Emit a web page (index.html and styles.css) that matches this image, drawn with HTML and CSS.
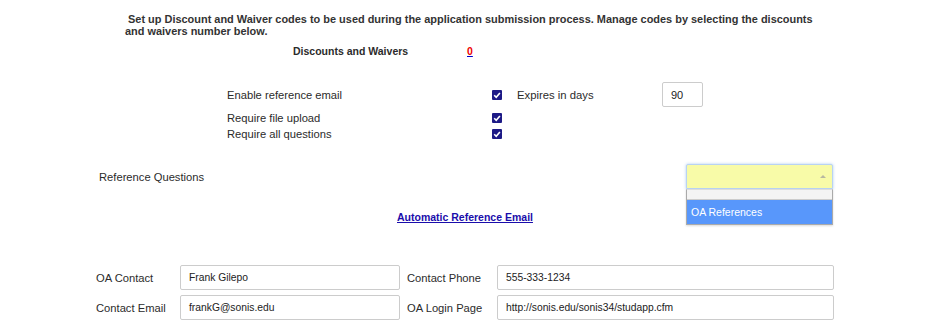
FILE: index.html
```html
<!DOCTYPE html>
<html>
<head>
<meta charset="utf-8">
<link rel="stylesheet" href="styles.css">
</head>
<body>
<div class="page">
  <p class="intro">&nbsp;Set up Discount and Waiver codes to be used during the application submission process. Manage codes by selecting the discounts and waivers number below.</p>
  <div class="dw">
    <span class="dw-label">Discounts and Waivers</span>
    <a class="dw-count" href="#">0</a>
  </div>

  <div class="settings">
    <div class="set-row first">
      <span class="set-label">Enable reference email</span>
      <span class="check"><svg viewBox="0 0 10 10" width="10" height="10"><path d="M2.2 5.2 L4.2 7.2 L7.9 2.9" fill="none" stroke="#fff" stroke-width="1.6"/></svg></span>
      <span class="exp-label">Expires in days</span>
      <span class="input small">90</span>
    </div>
    <div class="set-row second">
      <span class="set-label">Require file upload</span>
      <span class="check"><svg viewBox="0 0 10 10" width="10" height="10"><path d="M2.2 5.2 L4.2 7.2 L7.9 2.9" fill="none" stroke="#fff" stroke-width="1.6"/></svg></span>
    </div>
    <div class="set-row third">
      <span class="set-label">Require all questions</span>
      <span class="check"><svg viewBox="0 0 10 10" width="10" height="10"><path d="M2.2 5.2 L4.2 7.2 L7.9 2.9" fill="none" stroke="#fff" stroke-width="1.6"/></svg></span>
    </div>
  </div>

  <div class="refq">
    <span class="refq-label">Reference Questions</span>
    <div class="select-wrap">
      <div class="select"><span class="arrow"></span></div>
      <div class="dropdown">
        <div class="search"></div>
        <div class="option">OA References</div>
      </div>
    </div>
  </div>

  <div class="autolink"><a href="#">Automatic Reference Email</a></div>

  <div class="contact">
    <span class="c-label">OA Contact</span>
    <span class="input wide">Frank Gilepo</span>
    <span class="c-label second-col">Contact Phone</span>
    <span class="input wide">555-333-1234</span>
    <span class="c-label">Contact Email</span>
    <span class="input wide">frankG@sonis.edu</span>
    <span class="c-label second-col">OA Login Page</span>
    <span class="input wide">http://sonis.edu/sonis34/studapp.cfm</span>
  </div>
</div>
</body>
</html>
```

FILE: styles.css
```css
html, body {
  margin: 0;
  padding: 0;
  background: #fff;
}
body {
  font-family: "Liberation Sans", Arial, sans-serif;
  color: #2b2b2b;
  font-size: 11.2px;
}
.page {
  width: 936px;
  height: 332px;
  overflow: hidden;
  position: relative;
}
.intro {
  margin: 13px 0 0 125px;
  width: 700px;
  font-weight: bold;
  font-size: 10.95px;
  line-height: 12px;
  color: #333;
}
.dw {
  display: flex;
  margin: 8px 0 0 293px;
  font-size: 10.5px;
  line-height: 12px;
  font-weight: bold;
}
.dw-label {
  width: 174px;
}
.dw-count {
  color: #e00;
  text-decoration: underline;
  text-decoration-color: #00c;
}
.settings {
  margin: 25px 0 0 227px;
}
.set-row {
  display: flex;
  align-items: center;
}
.set-row.first { height: 25px; }
.set-row.second { height: 16px; margin-top: 3px; }
.set-row.third { height: 16px; }
.set-label {
  width: 265px;
}
.check {
  width: 10px;
  height: 10px;
  background: #1d1a86;
  border-radius: 1px;
  display: flex;
}
.exp-label {
  margin-left: 15px;
  width: 145px;
  font-size: 11.3px;
}
.input {
  display: flex;
  align-items: center;
  box-sizing: border-box;
  height: 25px;
  border: 1px solid #ccc;
  border-radius: 2px;
  padding-left: 8px;
  font-size: 11px;
  color: #222;
  background: #fff;
}
.input.small { width: 41px; }
.refq {
  display: flex;
  align-items: center;
  margin: 22px 0 0 99px;
  height: 25px;
}
.refq-label {
  width: 587px;
}
.select-wrap {
  position: relative;
  width: 147px;
  height: 25px;
}
.select {
  box-sizing: border-box;
  height: 25px;
  background: #f8fba8;
  border: 1px solid #b9d3f3;
  border-radius: 2px 2px 0 0;
  box-shadow: 0 0 3px rgba(120, 170, 230, 0.6);
  position: relative;
}
.arrow {
  position: absolute;
  right: 6px;
  top: 10px;
  width: 0;
  height: 0;
  border-left: 3px solid transparent;
  border-right: 3px solid transparent;
  border-bottom: 3px solid #b8b8a0;
}
.dropdown {
  position: absolute;
  left: 0;
  top: 25px;
  width: 147px;
  box-sizing: border-box;
  border: 1px solid #aaa;
  border-top: 1px solid #ddd;
  background: #fff;
  box-shadow: 0 1px 2px rgba(0,0,0,0.15);
}
.search {
  height: 9px;
  background: #f4f4f4;
  border-bottom: 1px solid #ccc;
}
.option {
  height: 24px;
  line-height: 24px;
  background: #5897fb;
  color: #fff;
  font-size: 10.5px;
  padding-left: 4px;
}
.autolink {
  margin-top: 20px;
  height: 16px;
  line-height: 16px;
  padding-left: 397px;
  font-size: 10.5px;
  font-weight: bold;
}
.autolink a {
  color: #1a0dab;
  text-decoration: underline;
}
.contact {
  display: grid;
  grid-template-columns: 84px 220px 97px 337px;
  grid-auto-rows: 25px;
  row-gap: 5px;
  margin: 40px 0 0 96px;
  align-items: center;
}
.c-label {
  font-size: 11.2px;
}
.c-label.second-col {
  padding-left: 7px;
}
.input.wide {
  padding-left: 8px;
  font-size: 10.3px;
}
```
